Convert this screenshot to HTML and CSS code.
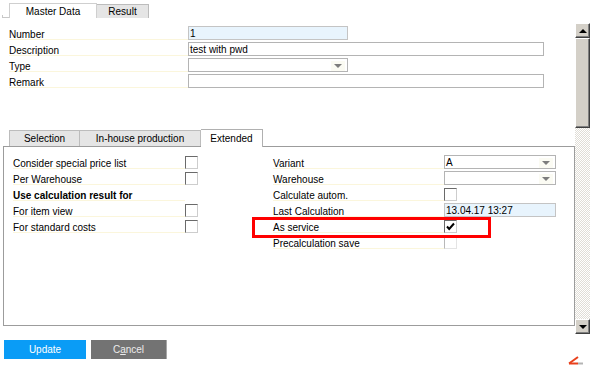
FILE: index.html
```html
<!DOCTYPE html>
<html lang="en">
<head>
    <meta charset="UTF-8">
    <title>Item calculation</title>
    <link rel="stylesheet" href="styles.css">
</head>
<body>

<div class="window">
    <div class="main">
        <div class="content">
            <!--头部标签-->
            <div class="top-tabs">
                <span class="tab-lead"></span>
                <div class="tab current tab-master">Master Data</div>
                <div class="tab tab-result">Result</div>
            </div>

            <!--主数据-->
            <div class="form">
                <div class="row">
                    <label>Number</label>
                    <div class="field short blue">1</div>
                </div>
                <div class="row">
                    <label>Description</label>
                    <div class="field long">test with pwd</div>
                </div>
                <div class="row">
                    <label>Type</label>
                    <div class="field short"><span class="arrow"></span></div>
                </div>
                <div class="row">
                    <label>Remark</label>
                    <div class="field long"></div>
                </div>
            </div>

            <!--子标签-->
            <div class="sub-tabs">
                <div class="tab tab-selection">Selection</div>
                <div class="tab tab-inhouse">In-house production</div>
                <div class="tab current tab-extended">Extended</div>
            </div>

            <div class="panel">
                <div class="col col-left">
                    <div class="row">
                        <label>Consider special price list</label>
                        <span class="check"></span>
                    </div>
                    <div class="row">
                        <label>Per Warehouse</label>
                        <span class="check"></span>
                    </div>
                    <div class="row">
                        <label class="bold">Use calculation result for</label>
                    </div>
                    <div class="row">
                        <label>For item view</label>
                        <span class="check"></span>
                    </div>
                    <div class="row">
                        <label>For standard costs</label>
                        <span class="check"></span>
                    </div>
                </div>
                <div class="col col-right">
                    <div class="row">
                        <label>Variant</label>
                        <div class="field side">A<span class="arrow"></span></div>
                    </div>
                    <div class="row">
                        <label>Warehouse</label>
                        <div class="field side"><span class="arrow"></span></div>
                    </div>
                    <div class="row">
                        <label>Calculate autom.</label>
                        <span class="check"></span>
                    </div>
                    <div class="row">
                        <label>Last Calculation</label>
                        <div class="field side blue">13.04.17 13:27</div>
                    </div>
                    <div class="row">
                        <label>As service</label>
                        <span class="check">
                            <svg width="11" height="11" viewBox="0 0 11 11"><path d="M2 5.5 L4.2 8 L9 2.5" fill="none" stroke="#000" stroke-width="2"/></svg>
                        </span>
                    </div>
                    <div class="row">
                        <label>Precalculation save</label>
                        <span class="check disabled"></span>
                    </div>
                </div>

                <!--标注框-->
                <div class="highlight"></div>
            </div>
        </div>

        <!--滚动条-->
        <div class="scrollbar">
            <div class="sb-btn"><span class="sb-up"></span></div>
            <div class="sb-thumb"></div>
            <div class="sb-track"></div>
            <div class="sb-btn"><span class="sb-down"></span></div>
        </div>
    </div>

    <div class="footer">
        <a href="#" class="btn btn-update">Update</a>
        <a href="#" class="btn btn-cancel">C<u>a</u>ncel</a>
        <svg class="corner" width="16" height="10" viewBox="0 0 16 10">
            <path d="M1 8.5 L10 2" stroke="#e8401c" stroke-width="2" fill="none"/>
            <path d="M1 8.5 H10" stroke="#e8401c" stroke-width="2"/>
            <path d="M10 8.5 H15" stroke="#b4b4b4" stroke-width="2"/>
        </svg>
    </div>
</div>

</body>
</html>
```

FILE: styles.css
```css
* {
    margin: 0;
    padding: 0;
    box-sizing: border-box;
}

body {
    font-family: "Liberation Sans", Arial, sans-serif;
    font-size: 10px;
    color: #000;
    background-color: #fff;
}

.window {
    width: 591px;
    height: 370px;
    overflow: hidden;
}

.main {
    display: flex;
    height: 335px;
}

.content {
    width: 575px;
    padding-left: 3px;
}

/*标签*/
.top-tabs,
.sub-tabs {
    display: flex;
    align-items: flex-end;
}

.top-tabs {
    height: 18px;
    margin-left: -1px;
}

.tab-lead {
    width: 7px;
    height: 3px;
    border-left: 1px solid #c8c8c8;
    border-bottom: 1px solid #c8c8c8;
}

.tab {
    height: 14px;
    line-height: 14px;
    text-align: center;
    background-color: #e5e5e5;
    border: 1px solid #bcbcbc;
    border-bottom: none;
}

.tab.current {
    height: 15px;
    line-height: 15px;
    background-color: #fff;
    border-color: #cfcfcf;
}

.tab-master { width: 88px; }
.tab-result { width: 52px; border-left: none; }

.sub-tabs {
    height: 17px;
    margin: 40px 0 0 6px;
    position: relative;
    z-index: 1;
}

.sub-tabs .tab {
    height: 16px;
    line-height: 16px;
}

.sub-tabs .tab.current {
    height: 18px;
    line-height: 17px;
    margin-bottom: -1px;
    border-color: #b0b0b0;
}

.tab-selection { width: 71px; }
.tab-inhouse { width: 121px; border-left: none; }
.tab-extended { width: 62px; border-left: none; }

/*表单行*/
.form {
    padding: 7px 0 0 6px;
}

.row {
    display: flex;
    align-items: center;
    height: 16px;
}

.row label {
    height: 13px;
    line-height: 13px;
    padding-top: 1px;
    border-bottom: 1px solid #fbf6dc;
}

.form .row label {
    width: 179px;
}

.bold {
    font-weight: bold;
}

.field {
    height: 14px;
    line-height: 12px;
    padding: 1px 0 0 1px;
    border: 1px solid #b4b4b4;
    display: flex;
    align-items: center;
    background-color: #fff;
}

.field.blue {
    background-color: #e8f4fd;
    border-color: #c4c4c4;
}

.field.short { width: 160px; }
.field.long { width: 356px; }
.field.side { width: 112px; }

.arrow {
    margin-left: auto;
    margin-right: 2px;
    width: 14px;
    height: 10px;
    background-color: #fbfbf3;
    display: flex;
    justify-content: center;
    align-items: center;
}

.arrow::after {
    content: "";
    border-left: 4px solid transparent;
    border-right: 4px solid transparent;
    border-top: 4px solid #7d7d7d;
}

/*面板*/
.panel {
    position: relative;
    height: 180px;
    border: 1px solid #9c9c9c;
    padding: 7px 0 0 9px;
    display: flex;
}

.col-left {
    width: 260px;
}

.col-left .row label {
    width: 172px;
}

.col-right .row label {
    width: 171px;
}

.check {
    width: 13px;
    height: 13px;
    border: 1px solid;
    border-color: #6a6a6a #cdcdcd #cdcdcd #6a6a6a;
    background-color: #fff;
    display: flex;
    justify-content: center;
    align-items: center;
}

.check.disabled {
    border-color: #b8b8b8 #e4e4e4 #e4e4e4 #b8b8b8;
}

.highlight {
    position: absolute;
    left: 248px;
    top: 70px;
    width: 239px;
    height: 21px;
    border: 3px solid #f00;
}

/*滚动条*/
.scrollbar {
    width: 15px;
    height: 311px;
    margin-top: 23px;
    display: flex;
    flex-direction: column;
    background: repeating-conic-gradient(#e0ddd6 0 25%, #fff 0 50%) 0 0 / 2px 2px;
}

.sb-btn,
.sb-thumb {
    background-color: #d4d0c8;
    border: 1px solid;
    border-color: #fff #404040 #404040 #fff;
    box-shadow: inset -1px -1px #808080;
}

.sb-btn {
    height: 15px;
    display: flex;
    justify-content: center;
    align-items: center;
}

.sb-thumb {
    height: 90px;
}

.sb-track {
    flex: 1;
}

.sb-up {
    border-left: 4px solid transparent;
    border-right: 4px solid transparent;
    border-bottom: 4px solid #000;
}

.sb-down {
    border-left: 4px solid transparent;
    border-right: 4px solid transparent;
    border-top: 4px solid #000;
}

/*底部按钮*/
.footer {
    display: flex;
    gap: 5px;
    padding: 5px 4px 0 4px;
}

.btn {
    height: 19px;
    line-height: 19px;
    text-align: center;
    text-decoration: none;
}

.btn-update {
    width: 82px;
    color: #fff;
    background-color: #0a9cf6;
}

.btn-cancel {
    width: 76px;
    color: #ececec;
    background-color: #737373;
    border-right: 1px solid #a6a6a6;
}

.corner {
    margin: 15px 3px 0 auto;
}
```
